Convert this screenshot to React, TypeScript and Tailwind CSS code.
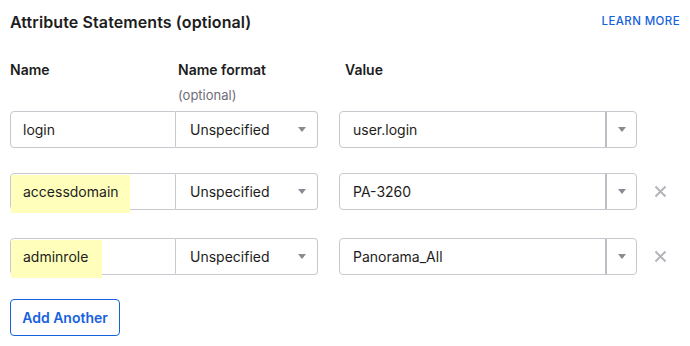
import React from 'react';

interface AttributeRow {
  name: string;
  format: string;
  value: string;
  highlight?: number;
  removable?: boolean;
  gapTop: string;
}

const rows: AttributeRow[] = [
  { name: 'login', format: 'Unspecified', value: 'user.login', gapTop: 'mt-[7px]' },
  { name: 'accessdomain', format: 'Unspecified', value: 'PA-3260', highlight: 119, removable: true, gapTop: 'mt-[25px]' },
  { name: 'adminrole', format: 'Unspecified', value: 'Panorama_All', highlight: 91, removable: true, gapTop: 'mt-[28px]' },
];

const Caret = () => (
  <svg width="8" height="5" viewBox="0 0 8 5" className="fill-[#8a8a92]">
    <path d="M0 0h8L4 5z" />
  </svg>
);

const Cross = () => (
  <svg width="13" height="13" viewBox="0 0 13 13" className="stroke-[#b4b4ba]" strokeWidth="2" fill="none">
    <path d="M1.5 1.5l10 10M11.5 1.5l-10 10" />
  </svg>
);

export default function App() {
  return (
    <div className="w-[690px] h-[346px] bg-white px-[10px] pt-[12px] text-[#1d1d21]" style={{ fontFamily: 'Inter, "Noto Sans", sans-serif' }}>
      <div className="flex items-start justify-between">
        <h2 className="text-[16px] leading-[20px] font-semibold tracking-[0.1px]">Attribute Statements (optional)</h2>
        <a className="text-[11.5px] leading-[16px] mt-[1px] font-medium text-[#1662dd] tracking-[0.4px]">LEARN MORE</a>
      </div>

      <div className="flex mt-[29px] text-[14px] leading-[18px] font-semibold">
        <div className="w-[168px]">Name</div>
        <div className="w-[167px]">
          <div>Name format</div>
          <div className="mt-[7px] text-[13px] font-normal text-[#6e6e78]">(optional)</div>
        </div>
        <div>Value</div>
      </div>

      {rows.map((row) => (
        <div key={row.name} className={`flex items-center ${row.gapTop}`}>
          <div className="relative w-[166px] h-[37px] border border-[#c8c8ce] rounded-l-[4px] flex items-center pl-[12px] text-[14px]">
            {row.highlight && (
              <div className="absolute left-[0px] top-[1px] h-[38px] bg-[#ffffbb]" style={{ width: row.highlight }} />
            )}
            <span className="relative">{row.name}</span>
          </div>
          <div className="w-[142px] h-[37px] border border-l-0 border-[#c8c8ce] rounded-r-[4px] flex items-center justify-between pl-[14px] pr-[11px] text-[14px]">
            <span>{row.format}</span>
            <Caret />
          </div>
          <div className="ml-[21px] w-[298px] h-[37px] border border-[#c8c8ce] rounded-[4px] flex text-[14px]">
            <div className="flex-1 flex items-center pl-[13px]">{row.value}</div>
            <div className="w-[31px] border-l-2 border-[#bdbdc3] flex items-center justify-center">
              <Caret />
            </div>
          </div>
          {row.removable && (
            <div className="ml-[17px] flex items-center">
              <Cross />
            </div>
          )}
        </div>
      ))}

      <button className="mt-[24px] h-[37px] w-[110px] border border-[#1662dd] rounded-[4px] text-[14px] font-semibold text-[#1662dd]">
        Add Another
      </button>
    </div>
  );
}
